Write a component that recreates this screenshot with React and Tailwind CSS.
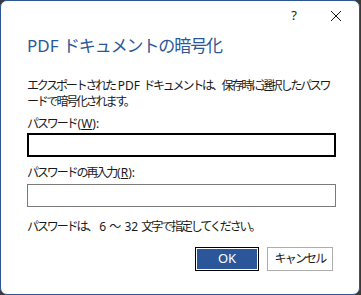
function L({ children, gap = "" }) {
  return <span className={"tracking-normal " + gap}>{children}</span>;
}

export default function App() {
  return (
    <div className="w-[361px] h-[295px] bg-[#3a3a3a]">
      <div
        className="w-[360px] h-[295px] bg-white border border-[#2b5797] rounded-[7px] flex flex-col text-[#1a1a1a]"
        style={{ fontFamily: '"Noto Sans", "Noto Sans CJK JP", sans-serif' }}
      >
        {/* title bar */}
        <div className="h-[30px] flex items-center justify-end">
          <span className="text-[13px] w-[20px] text-center mr-[26px]">?</span>
          <svg width="12" height="12" viewBox="0 0 12 12" className="mr-[17px]">
            <path d="M1 1 L11 11 M11 1 L1 11" stroke="#1a1a1a" strokeWidth="1" />
          </svg>
        </div>

        <div className="px-[26px] flex flex-col">
          <div className="mt-[3px] text-[17px] leading-[24px] tracking-[-1.1px] text-[#2b5797]">
            <span className="tracking-normal">PDF </span>ドキュメントの暗号化
          </div>

          <div className="mt-[20px] text-[12px] leading-[16px] tracking-[-2.2px]">
            エクスポートされた<L gap="ml-[3px]">PDF </L>ドキュメントは、保存時に選択したパスワードで暗号化されます。
          </div>

          <div className="mt-[6px] text-[12px] leading-[16px] tracking-[-2.1px]">
            パスワード<L gap="ml-[1px]">(<span className="underline">W</span>):</L>
          </div>
          <div className="mt-[1px] h-[24px] w-[309px] border-2 border-black"></div>

          <div className="mt-[8px] text-[12px] leading-[16px] tracking-[-2.1px]">
            パスワードの再入力<L gap="ml-[1px]">(<span className="underline">R</span>):</L>
          </div>
          <div className="mt-[3px] h-[23px] w-[309px] border border-[#7a7a7a]"></div>

          <div className="mt-[12px] text-[12px] leading-[16px] tracking-[-2.1px]">
            パスワードは、<L gap="ml-[3px]">6 ～ 32 </L>文字で指定してください。
          </div>

          <div className="mt-[12px] flex justify-end gap-[8px]">
            <div className="w-[64px] h-[24px] border border-black p-[1px]">
              <div className="w-full h-full bg-[#2b579a] text-white text-[13px] flex items-center justify-center">
                OK
              </div>
            </div>
            <div className="w-[66px] h-[24px] border border-[#adadad] text-[12px] tracking-[-1.8px] flex items-center justify-center">
              キャンセル
            </div>
          </div>
        </div>
      </div>
    </div>
  );
}
